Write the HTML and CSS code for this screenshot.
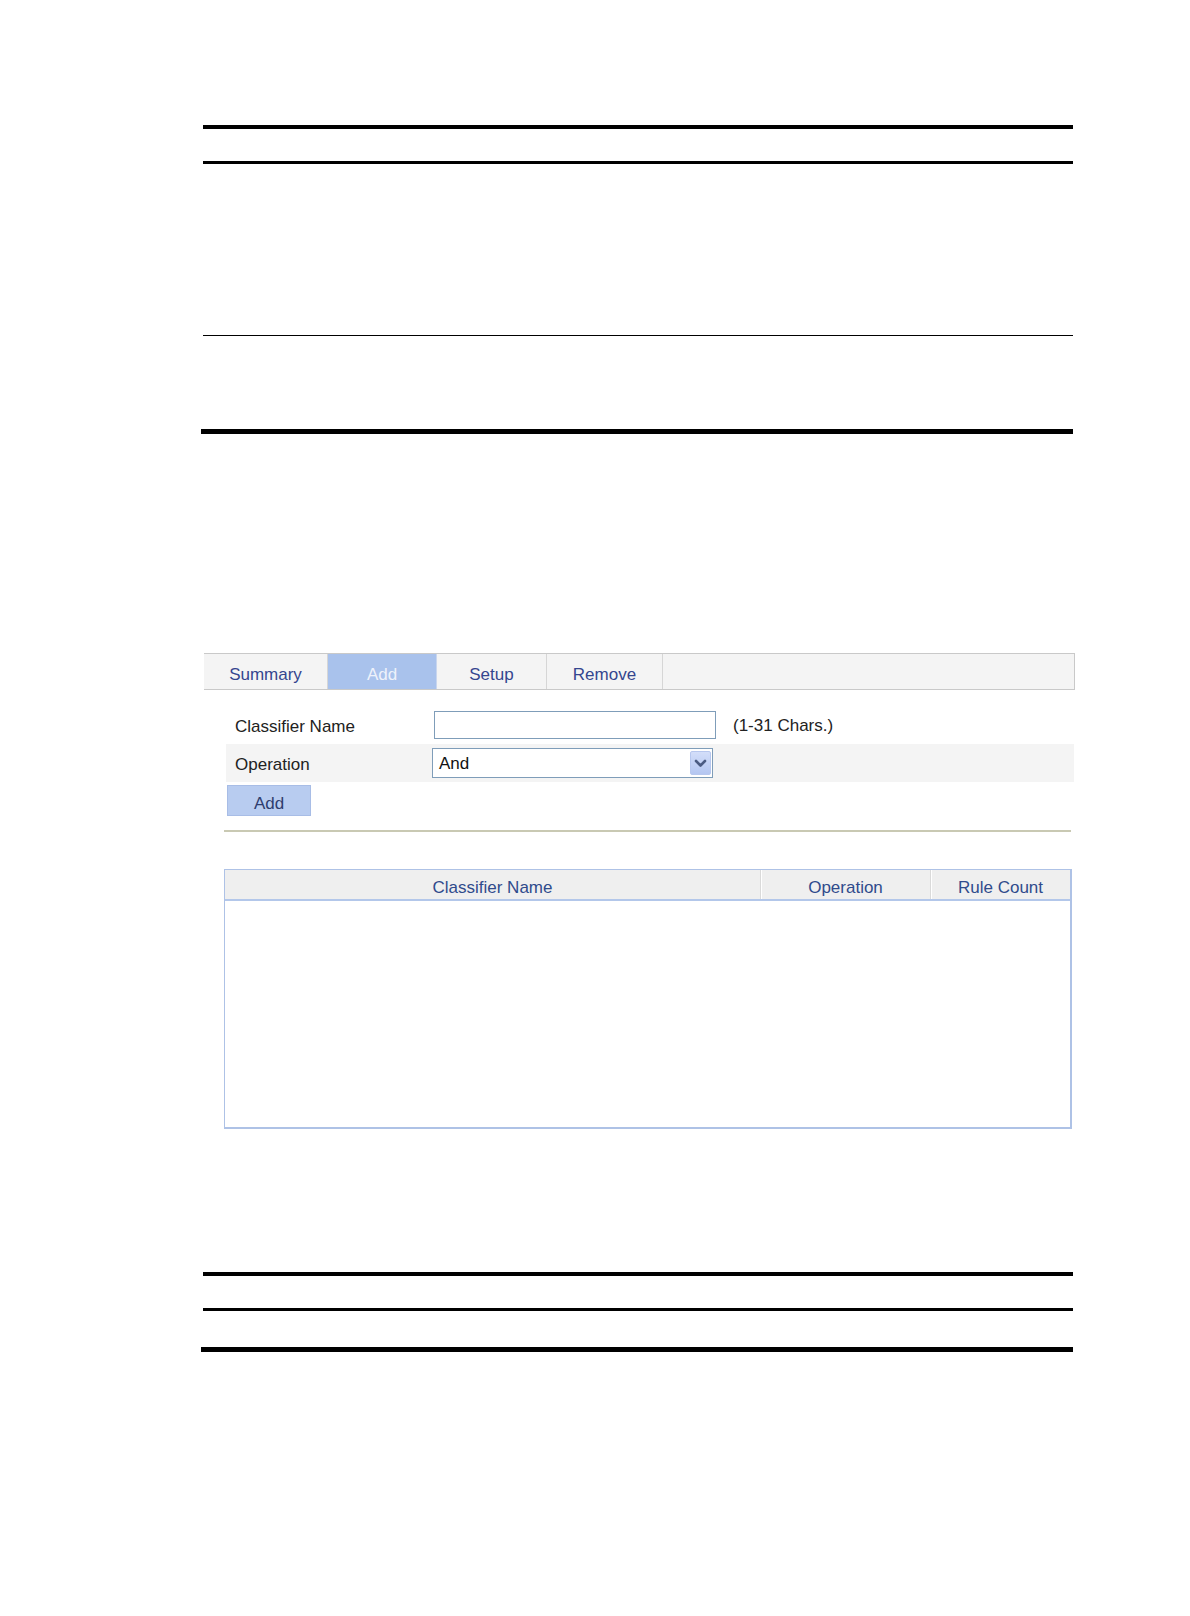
FILE: index.html
```html
<!DOCTYPE html>
<html lang="en">
<head>
<meta charset="utf-8">
<title>Classifier - Add</title>
<link rel="stylesheet" href="styles.css">
</head>
<body>
<div class="page">
  <div class="doc-table">
    <div class="doc-head"></div>
    <div class="doc-row doc-row-tall"></div>
    <div class="doc-row doc-row-short"></div>
    <div class="doc-end"></div>
  </div>

  <div class="panel">
    <div class="tabs">
      <div class="tab tab-summary">Summary</div>
      <div class="tab tab-add active">Add</div>
      <div class="tab tab-setup">Setup</div>
      <div class="tab tab-remove">Remove</div>
    </div>

    <div class="form">
      <div class="row">
        <div class="label">Classifier Name</div>
        <div class="input"></div>
        <div class="hint">(1-31 Chars.)</div>
      </div>
      <div class="row alt">
        <div class="label">Operation</div>
        <div class="select">
          <span class="select-value">And</span>
          <span class="dd-btn">
            <svg width="19" height="22" viewBox="0 0 19 22"><polyline points="5,9 9.5,13.5 14,9" fill="none" stroke="#4b5b82" stroke-width="2.6" stroke-linecap="round" stroke-linejoin="round"/></svg>
          </span>
        </div>
      </div>
      <button class="add-btn" type="button">Add</button>
      <div class="separator"></div>

      <div class="grid">
        <div class="grid-head">
          <div class="th th-name">Classifier Name</div>
          <div class="th th-op">Operation</div>
          <div class="th th-count">Rule Count</div>
        </div>
      </div>
    </div>
  </div>

  <div class="doc-table doc-table-2">
    <div class="doc-head"></div>
    <div class="doc-row doc-row-mid"></div>
    <div class="doc-end"></div>
  </div>
</div>
</body>
</html>
```
FILE: styles.css
```css
html, body {
  margin: 0;
  padding: 0;
  background: #ffffff;
}

body {
  font-family: "Liberation Sans", Arial, sans-serif;
  font-size: 17px;
  color: #222222;
}

.page {
  width: 870px;
  margin-left: 203px;
  padding-top: 125px;
  padding-bottom: 200px;
}

/* document-style tables */
.doc-head {
  height: 32px;
  border-top: 4px solid #000;
  border-bottom: 3px solid #000;
}

.doc-row-tall {
  height: 171px;
  border-bottom: 1px solid #000;
}

.doc-row-short {
  height: 93px;
}

.doc-row-mid {
  height: 36px;
}

.doc-end {
  height: 5px;
  width: 872px;
  margin-left: -2px;
  background: #000;
}

.doc-table-2 {
  margin-top: 143px;
}

/* web UI panel */
.panel {
  width: 871px;
  margin-left: 1px;
  margin-top: 219px;
}

.tabs {
  display: flex;
  height: 35px;
  background: #f4f4f4;
  border-top: 1px solid #c9c9c9;
  border-bottom: 1px solid #c9c9c9;
  border-right: 1px solid #c9c9c9;
}

.tab {
  box-sizing: border-box;
  display: flex;
  align-items: center;
  justify-content: center;
  padding-top: 6px;
  color: #34468f;
  border-right: 1px solid #d6d6d6;
}

.tab-summary { width: 124px; }
.tab-add { width: 109px; }
.tab-setup { width: 110px; }
.tab-remove { width: 116px; }

.tab.active {
  background: #a9c2ec;
  color: #eef2fb;
  border-right-color: #c9d6ee;
}

.form {
  width: 848px;
  margin-left: 22px;
  margin-top: 16px;
}

.row {
  display: flex;
  align-items: center;
  height: 38px;
}

.row.alt {
  background: #f4f4f4;
}

.label {
  width: 199px;
  padding-left: 9px;
  padding-top: 3px;
  color: #222222;
}

.input {
  box-sizing: border-box;
  width: 282px;
  height: 28px;
  background: #fff;
  border: 1px solid #7f9db9;
}

.hint {
  margin-left: 17px;
  padding-top: 2px;
  color: #222222;
}

.select {
  box-sizing: border-box;
  display: flex;
  align-items: center;
  justify-content: space-between;
  width: 281px;
  height: 30px;
  margin-left: -2px;
  padding-left: 6px;
  padding-right: 1px;
  background: #fff;
  border: 1px solid #7f9db9;
}

.select-value {
  padding-top: 2px;
  color: #111111;
}

.dd-btn {
  box-sizing: border-box;
  display: flex;
  align-items: center;
  justify-content: center;
  width: 21px;
  height: 24px;
  background: linear-gradient(#d3def9, #b4c6f1);
  border: 1px solid #b7c7ee;
  border-radius: 2px;
}

.dd-btn svg {
  display: block;
}

.add-btn {
  display: block;
  box-sizing: border-box;
  width: 84px;
  height: 31px;
  margin: 3px 0 0 1px;
  padding: 6px 0 0 0;
  font-family: "Liberation Sans", Arial, sans-serif;
  font-size: 17px;
  color: #2f3d6e;
  background: #b8ccf0;
  border: 1px solid #a8bde6;
  border-radius: 0;
}

.separator {
  width: 847px;
  margin-left: -2px;
  margin-top: 14px;
  border-top: 2px solid #c9c9b3;
}

.grid {
  box-sizing: border-box;
  width: 848px;
  height: 260px;
  margin-left: -2px;
  margin-top: 37px;
  border: 1px solid #aec2e6;
  border-right-width: 2px;
  border-bottom-width: 2px;
  background: #fff;
}

.grid-head {
  display: flex;
  height: 29px;
  background: #efefef;
  border-bottom: 2px solid #b3c7ea;
}

.th {
  box-sizing: border-box;
  display: flex;
  align-items: center;
  justify-content: center;
  padding-top: 6px;
  color: #2f4b8c;
}

.th-name { width: 535px; }

.th-op {
  width: 170px;
  border-left: 1px solid #dadada;
  box-shadow: inset 1px 0 0 #ffffff;
}

.th-count {
  flex: 1;
  border-left: 1px solid #dadada;
  box-shadow: inset 1px 0 0 #ffffff;
}
```
